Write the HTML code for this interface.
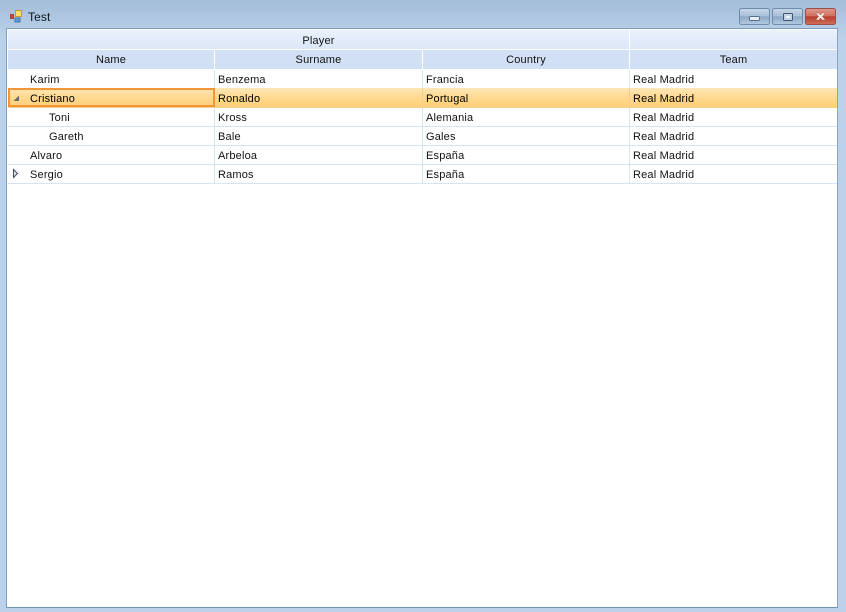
<!DOCTYPE html>
<html><head><meta charset="utf-8"><style>
html,body{margin:0;padding:0}
body{width:846px;height:612px;position:relative;overflow:hidden;background:#bcd2ea;font:11px "Liberation Sans",sans-serif;letter-spacing:.18px;color:#111}
#title2{position:absolute;left:0;top:0;width:846px;height:40px;background:linear-gradient(180deg,#a3bcd8 0,#bdd3ea 100%)}
#t{position:absolute;left:28px;top:10px;font-size:12px;letter-spacing:.1px;color:#101820;line-height:14px}
#grid{position:absolute;left:6px;top:28px;width:830px;height:578px;background:#fff;border:1px solid #7d9ebf;border-right-color:#8aa6c2;border-bottom-color:#6f94b4}
.c{position:absolute;box-sizing:border-box;white-space:nowrap;overflow:hidden}
.g{background:linear-gradient(180deg,#e9f1fb,#dbe7f8);top:1px;height:20px;text-align:center;line-height:22px;border-right:1px solid #fff;border-bottom:1px solid #fff}
.h{background:#d1e0f5;top:21px;height:19px;text-align:center;line-height:20px;border-right:1px solid #fff}
.r{position:absolute;left:1px;width:829px;height:19px;box-sizing:border-box;border-bottom:1px solid #d6e3f3}
.r span{position:absolute;top:1px;line-height:18px;white-space:nowrap}
.v{position:absolute;top:0;bottom:0;width:1px;background:#d6e3f3}
.sel{background:linear-gradient(180deg,#fde7b8 0,#fed98f 50%,#fecf78 100%);border-bottom:1px solid #f3cf8c;color:#000}
.sel .v{background:#f3cf8c}
.sel span{top:2px}
</style></head><body>
<div id="title2"></div>
<svg style="position:absolute;left:9px;top:9px" width="15" height="15" viewBox="0 0 15 15">
<rect x="1.500" y="5.500" width="3" height="4" fill="#d8412f" stroke="#9e4a3c"/>
<rect x="6" y="9" width="5" height="4" fill="#5b9be0" stroke="#4a76a8"/>
<rect x="6.500" y="1.500" width="6" height="6" fill="#fcdc6a" stroke="#c09a3e"/>
</svg>
<div id="t">Test</div>
<svg style="position:absolute;left:739px;top:8px" width="98" height="18" viewBox="0 0 98 18">
<defs>
<linearGradient id="b" x1="0" y1="0" x2="0" y2="1"><stop offset="0" stop-color="#c6d7e9"/><stop offset=".48" stop-color="#a9c0d8"/><stop offset=".5" stop-color="#8ba6c3"/><stop offset="1" stop-color="#b4cbe2"/></linearGradient>
<linearGradient id="x" x1="0" y1="0" x2="0" y2="1"><stop offset="0" stop-color="#dc9a8e"/><stop offset=".48" stop-color="#cf6f5f"/><stop offset=".5" stop-color="#b63c2c"/><stop offset="1" stop-color="#d0705a"/></linearGradient>
</defs>
<rect x=".5" y=".5" width="30" height="16" rx="2" fill="url(#b)" stroke="#6f8cab"/>
<rect x="33.500" y=".5" width="30" height="16" rx="2" fill="url(#b)" stroke="#6f8cab"/>
<rect x="66.500" y=".5" width="30" height="16" rx="2" fill="url(#x)" stroke="#9a4f48"/>
<rect x="10.500" y="8.500" width="10" height="4" rx="1" fill="#e8eff7" stroke="#5a708a"/>
<rect x="44.500" y="5.500" width="9" height="7" rx="1" fill="#c4d4e6" stroke="#42576f"/>
<rect x="47" y="8" width="4" height="2" fill="#f2f6fa"/>
<path d="M76.500 5l3.300 0 1.700 2 1.700-2 3.300 0-3.200 3.500 3.200 3.500-3.300 0-1.700-2-1.700 2-3.300 0 3.200-3.500z" fill="#f6efe9" stroke="#a8584c" stroke-width=".5"/>
</svg>
<div id="grid">
<div class="c g" style="left:1px;width:622px">Player</div>
<div class="c g" style="left:623px;width:207px;border-right:0"></div>
<div class="c h" style="left:1px;width:207px">Name</div>
<div class="c h" style="left:208px;width:208px">Surname</div>
<div class="c h" style="left:416px;width:207px">Country</div>
<div class="c h" style="left:623px;width:207px;border-right:0">Team</div>

<div class="r" style="top:41px;height:18px;border-bottom:0"><i class="v" style="left:206px"></i><i class="v" style="left:414px"></i><i class="v" style="left:621px"></i><span style="left:22px">Karim</span><span style="left:210px">Benzema</span><span style="left:418px">Francia</span><span style="left:625px">Real Madrid</span></div>
<div class="r sel" style="top:59px;height:20px"><i class="v" style="left:414px"></i><i class="v" style="left:621px"></i><span style="left:210px">Ronaldo</span><span style="left:418px">Portugal</span><span style="left:625px">Real Madrid</span></div>
<div style="position:absolute;left:1px;top:59px;width:207px;height:19px;box-sizing:border-box;border:2px solid #f29536"></div>
<svg style="position:absolute;left:5px;top:65px" width="9" height="9" viewBox="0 0 9 9"><path d="M7 1.500V7H1.500z" fill="#6a6a72"/></svg>
<div class="c" style="left:23px;top:61px;line-height:18px;color:#000">Cristiano</div>
<div class="r" style="top:79px"><i class="v" style="left:206px"></i><i class="v" style="left:414px"></i><i class="v" style="left:621px"></i><span style="left:41px">Toni</span><span style="left:210px">Kross</span><span style="left:418px">Alemania</span><span style="left:625px">Real Madrid</span></div>
<div class="r" style="top:98px"><i class="v" style="left:206px"></i><i class="v" style="left:414px"></i><i class="v" style="left:621px"></i><span style="left:41px">Gareth</span><span style="left:210px">Bale</span><span style="left:418px">Gales</span><span style="left:625px">Real Madrid</span></div>
<div class="r" style="top:117px"><i class="v" style="left:206px"></i><i class="v" style="left:414px"></i><i class="v" style="left:621px"></i><span style="left:22px">Alvaro</span><span style="left:210px">Arbeloa</span><span style="left:418px">España</span><span style="left:625px">Real Madrid</span></div>
<div class="r" style="top:136px"><i class="v" style="left:206px"></i><i class="v" style="left:414px"></i><i class="v" style="left:621px"></i><span style="left:22px">Sergio</span><span style="left:210px">Ramos</span><span style="left:418px">España</span><span style="left:625px">Real Madrid</span></div>
<svg style="position:absolute;left:5px;top:139px" width="8" height="11" viewBox="0 0 8 11"><path d="M1.500 1.500L5.500 5.500 1.500 9.500z" fill="#dfe3ea" stroke="#4a4a66"/></svg>
</div>
</body></html>
